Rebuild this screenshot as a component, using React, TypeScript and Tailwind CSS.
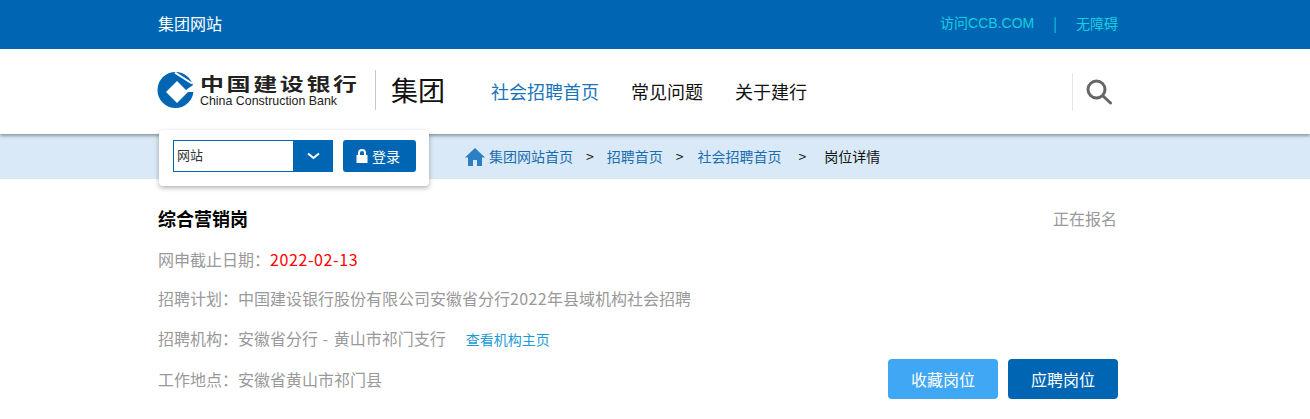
import React from "react";

const font = "font-['Noto_Sans_CJK_SC','Liberation_Sans',sans-serif]";

function Logo() {
  return (
    <svg width="38" height="38" viewBox="0 0 38 38" className="shrink-0 -ml-px -mt-[3px]">
      <circle cx="18.5" cy="19" r="18" fill="#0066b3" />
      <path d="M18 1.7 L35 12.5" stroke="#fff" strokeWidth="2" fill="none" />
      <path d="M27 21 L31 17.5 L35.5 14.5 L38 14 L38 21 Z" fill="#fff" />
      <path d="M20 10 L31 21 L20 32 L9 21 Z" fill="#fff" />
    </svg>
  );
}

export default function App() {
  return (
    <div className={`${font} w-[1310px] h-[419px] overflow-hidden bg-white relative`}>
      <div className="h-[49px] bg-[#0066b3]">
        <div className="ml-[158px] w-[960px] h-full flex items-center justify-between pb-[3px]">
          <span className="text-[16px] text-white">集团网站</span>
          <div className="flex items-center text-[14px] text-[#12d0e0]">
            <span>访问<span className="font-['Liberation_Sans',sans-serif]">CCB.COM</span></span>
            <span className="ml-[19px]">|</span>
            <span className="ml-[19px]">无障碍</span>
          </div>
        </div>
      </div>
      <div className="h-[85px] bg-white shadow-[0_2px_3px_rgba(0,0,0,0.35)] relative z-10">
        <div className="ml-[158px] w-[960px] h-full flex items-center">
          <Logo />
          <div className="ml-[5px] flex flex-col w-[159px] -mt-[3px]">
            <span className="text-[18px] leading-[18px] font-bold text-[#222] tracking-[2px] whitespace-nowrap scale-x-[1.33] origin-left">中国建设银行</span>
            <span className="mt-[4px] text-[12.4px] leading-[11px] text-[#222] font-['Liberation_Sans',sans-serif] whitespace-nowrap">China Construction Bank</span>
          </div>
          <div className="ml-[16px] w-px h-[40px] bg-[#c8c8c8] -mt-[3px]" />
          <span className="ml-[15px] text-[27px] leading-none text-[#111] -mt-[5px]">集团</span>
          <span className="ml-[46px] text-[18px] text-[#1a74b8]">社会招聘首页</span>
          <span className="ml-[32px] text-[18px] text-[#111]">常见问题</span>
          <span className="ml-[32px] text-[18px] text-[#111]">关于建行</span>
          <div className="ml-auto w-[46px] h-[38px] border-l border-[#e5e5e5] flex items-center pl-[13px]">
            <svg width="26" height="26" viewBox="0 0 26 26" fill="none" stroke="#666" strokeWidth="3">
              <circle cx="10.5" cy="10.5" r="8.5" />
              <path d="M17 17 L24.5 24" strokeLinecap="round" />
            </svg>
          </div>
        </div>
      </div>
      <div className="h-[45px] bg-[#d9e9f7]">
        <div className="ml-[158px] w-[960px] h-full flex items-center relative">
          <div className="absolute left-px top-[-4px] z-20 w-[270px] h-[56px] bg-white rounded-[4px] shadow-[0_2px_5px_rgba(0,0,0,0.3)] flex items-center pl-[14px] pb-[4px]">
            <div className="flex w-[160px] h-[32px] border border-[#0066b3]">
              <span className="flex-1 pl-[3px] text-[13px] leading-[28px] text-[#333]">网站</span>
              <span className="w-[40px] -mr-px bg-[#0066b3] flex items-center justify-center">
                <svg width="13" height="8" viewBox="0 0 13 8" fill="none" stroke="#fff" strokeWidth="2"><path d="M1 1.5 L6.5 6 L12 1.5" /></svg>
              </span>
            </div>
            <div className="ml-[10px] w-[73px] h-[32px] bg-[#0066b3] rounded-[3px] flex items-center pl-[13px] text-white text-[14px]">
              <svg width="12" height="14" viewBox="0 0 12 14" className="mr-[4px]" fill="#fff">
                <path d="M2 6V4a4 4 0 0 1 8 0v2h1.5v8H.5V6Zm2 0h4V4a2 2 0 0 0-4 0Z" fillRule="evenodd" />
              </svg>
              登录
            </div>
          </div>
          <div className="ml-[307px] flex items-center text-[14px]">
            <svg width="20" height="18" viewBox="0 0 20 18" fill="#2b7fc3" className="mr-[4px]">
              <path d="M10 0 L20 9.5 L17 9.5 L17 18 L12 18 L12 12 L8 12 L8 18 L3 18 L3 9.5 L0 9.5 Z" />
            </svg>
            <span className="text-[#1a6db0]">集团网站首页</span>
            <span className="ml-[13px] text-[#111]">&gt;</span>
            <span className="ml-[13px] text-[#1a6db0]">招聘首页</span>
            <span className="ml-[13px] text-[#111]">&gt;</span>
            <span className="ml-[14px] text-[#1a6db0]">社会招聘首页</span>
            <span className="ml-[17px] text-[#111]">&gt;</span>
            <span className="ml-[18px] text-[#111]">岗位详情</span>
          </div>
        </div>
      </div>
      <div className="ml-[158px] w-[960px]">
        <div className="mt-[27px] flex justify-between items-center h-[24px]">
          <span className="text-[18px] font-bold text-black">综合营销岗</span>
          <span className="text-[16px] text-[#999] mr-px">正在报名</span>
        </div>
        <div className="mt-[8px] flex flex-col text-[16px] leading-[40px] text-[#999]">
          <div className="h-[40px] pt-px">网申截止日期：<span className="text-[#ff0000] tracking-[0.6px]">2022-02-13</span></div>
          <div>招聘计划：中国建设银行股份有限公司安徽省分行<span className="tracking-[0.35px]">2022</span>年县域机构社会招聘</div>
          <div>招聘机构：安徽省分行<span className="tracking-[1px]"> - </span>黄山市祁门支行<span className="ml-[20px] text-[14px] text-[#1c9ad6]">查看机构主页</span></div>
          <div className="flex justify-between items-center h-[40px]">
            <span>工作地点：安徽省黄山市祁门县</span>
            <div className="flex gap-[10px] text-white text-[16px]">
              <span className="w-[110px] h-[40px] leading-[40px] rounded-[4px] bg-[#3fa7f3] flex items-center justify-center">收藏岗位</span>
              <span className="w-[110px] h-[40px] leading-[40px] rounded-[4px] bg-[#0066b3] flex items-center justify-center">应聘岗位</span>
            </div>
          </div>
        </div>
      </div>
    </div>
  );
}
